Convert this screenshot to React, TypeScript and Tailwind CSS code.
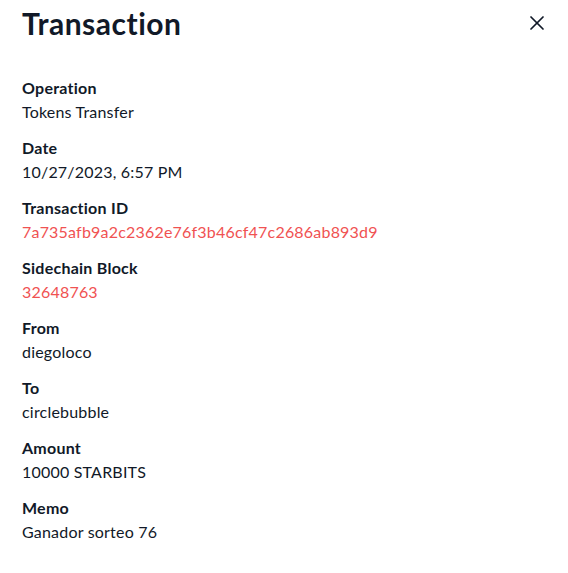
import { X } from "lucide-react";

const rows: { label: string; value: string; red?: boolean }[] = [
  { label: "Operation", value: "Tokens Transfer" },
  { label: "Date", value: "10/27/2023, 6:57 PM" },
  { label: "Transaction ID", value: "7a735afb9a2c2362e76f3b46cf47c2686ab893d9", red: true },
  { label: "Sidechain Block", value: "32648763", red: true },
  { label: "From", value: "diegoloco" },
  { label: "To", value: "circlebubble" },
  { label: "Amount", value: "10000 STARBITS" },
  { label: "Memo", value: "Ganador sorteo 76" },
];

export default function App() {
  return (
    <div className="w-[568px] h-[573px] bg-white text-[#111928] font-['Lato',sans-serif]">
      <div className="flex items-start justify-between pl-[22px] pr-[25px] pt-[5px]">
        <h1 className="text-[30px] leading-[36px] font-bold tracking-[0.5px]">Transaction</h1>
        <button className="mt-[13px] text-[#111928]">
          <X size={24} strokeWidth={1.75} className="-m-[6px] mt-[-7px]" />
        </button>
      </div>
      <div className="flex flex-col gap-3 pl-[22px] pt-[35px]">
        {rows.map((r) => (
          <div key={r.label} className="flex flex-col">
            <div className="text-base leading-6 font-bold tracking-[0.25px]">{r.label}</div>
            <div className={"text-base leading-6 tracking-[0.2px] " + (r.red ? "text-[#f05252]" : "text-[#111928]")}>{r.value}</div>
          </div>
        ))}
      </div>
    </div>
  );
}
